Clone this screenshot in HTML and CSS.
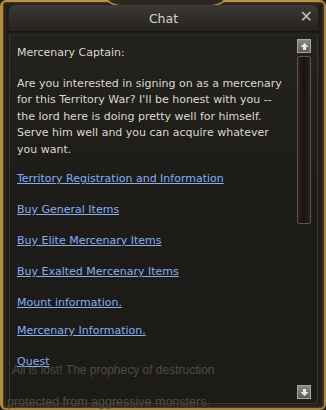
FILE: index.html
```html
<!DOCTYPE html>
<html>
<head>
<meta charset="utf-8">
<link rel="stylesheet" href="styles.css">
</head>
<body>
<div class="window">
  <div class="ornament"></div>
  <div class="titlebar">
    <span class="title">Chat</span>
    <span class="close">✕</span>
  </div>
  <div class="panel">
    <div class="text">
      <p class="speaker">Mercenary Captain:</p>
      <p class="speech">Are you interested in signing on as a mercenary for this Territory War? I'll be honest with you -- the lord here is doing pretty well for himself. Serve him well and you can acquire whatever you want.</p>
      <ul class="links">
        <li><a>Territory Registration and Information</a></li>
        <li><a>Buy General Items</a></li>
        <li><a>Buy Elite Mercenary Items</a></li>
        <li><a>Buy Exalted Mercenary Items</a></li>
        <li class="tight"><a>Mount information.</a></li>
        <li><a>Mercenary Information.</a></li>
        <li><a>Quest</a></li>
      </ul>
    </div>
    <div class="scrollbar">
      <div class="btn up"><svg width="9" height="9" viewBox="0 0 9 9"><path d="M4.5 1 L8.5 5 L6 5 L6 8 L3 8 L3 5 L0.5 5 Z" fill="#e8e8e4"/></svg></div>
      <div class="thumb"></div>
      <div class="spacer"></div>
      <div class="btn down"><svg width="9" height="9" viewBox="0 0 9 9"><path d="M4.5 8 L8.5 4 L6 4 L6 1 L3 1 L3 4 L0.5 4 Z" fill="#e8e8e4"/></svg></div>
    </div>
  </div>
  <div class="behind b1">All is lost! The prophecy of destruction</div>
  <div class="behind b2">protected from aggressive monsters.</div>
</div>
</body>
</html>
```
FILE: styles.css
```css
* { box-sizing: border-box; }
html, body { margin: 0; padding: 0; }
body { width: 326px; height: 410px; background: #1c1a17; overflow: hidden; font-family: "DejaVu Sans", Verdana, sans-serif; }
.window {
  position: relative;
  width: 326px; height: 410px;
  background: #1f1d1a;
  border: 2px solid #a8843c;
  border-left: 3px solid #b08a40;
  border-top-color: #b89248;
  border-radius: 6px;
  box-shadow: inset 0 0 0 1px #4a3a1c, inset 0 0 0 3px #2a2520;
  display: flex; flex-direction: column;
  padding: 3px 6px 4px 6px;
}
.ornament {
  position: absolute; left: 104px; top: -2px; width: 118px; height: 9px;
  border: 2px solid #b08a40; border-top: none;
  border-radius: 0 0 40px 40px / 0 0 9px 9px;
  background: #2c2820;
}
.titlebar {
  height: 27px;
  background: linear-gradient(#3d3933, #2e2b27 60%, #25231f);
  border-radius: 6px 6px 0 0;
  display: flex; align-items: center; justify-content: center;
  position: relative;
  border-bottom: 1px solid #151411;
}
.title { color: #d6d2cb; font-size: 12.5px; margin-top: 1px; }
.close { position: absolute; right: 5px; top: 2px; color: #c4c0b4; font-size: 16px; font-weight: bold; }
.panel {
  flex: 1;
  display: flex;
  background: linear-gradient(#24221e, #1e1c19 40%, #1d1b18);
  border: 1px solid #3b3730;
  border-top-color: #2c2a25;
  margin-top: 2px;
  padding: 4px 5px 1px 7px;
  border-radius: 0 0 4px 4px;
}
.text { flex: 1; color: #dcd8cf; font-size: 11px; line-height: 16.5px; }
.text p { margin: 0; }
.speaker { margin-top: 6px !important; }
.speech { margin-top: 14px !important; }
.links { list-style: none; margin: 13px 0 0 0; padding: 0; }
.links li { height: 31px; }
.links li.tight { height: 28px; }
.links a { color: #86aef0; text-decoration: underline; }
.scrollbar { width: 15px; display: flex; flex-direction: column; margin-left: 6px; }
.btn {
  width: 14px; height: 14px;
  background: linear-gradient(#8a8884, #5e5c58);
  border: 1px solid #a7a59f;
  display: flex; align-items: center; justify-content: center;
}
.thumb {
  width: 14px; height: 168px; margin-top: 3px;
  border: 1px solid #5c5448;
  border-radius: 2px;
  background: linear-gradient(90deg, #2a2118, #1a140e 50%, #2a2118);
}
.spacer { flex: 1; }
.down { margin-bottom: 3px; }
.behind { position: absolute; color: #4f4b45; font-size: 12px; font-family: "Liberation Sans", Arial, sans-serif; pointer-events: none; }
.b1 { left: 9px; top: 361px; }
.b2 { left: 4px; top: 393px; font-size: 12.5px; }
```
